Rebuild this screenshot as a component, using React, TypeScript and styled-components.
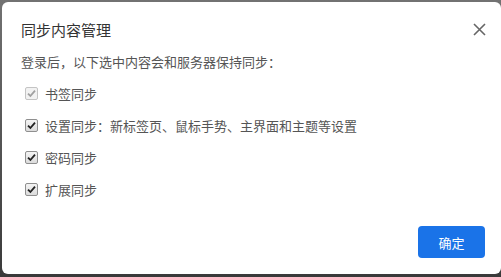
import React, { ReactElement } from 'react';
import styled, { createGlobalStyle } from 'styled-components';

const GlobalStyle = createGlobalStyle`
  html, body {
    margin: 0;
    padding: 0;
    width: 501px;
    height: 277px;
    overflow: hidden;
    background: linear-gradient(#727272, #3a3a3a);
    font-family: "Liberation Sans", "Noto Sans CJK SC", sans-serif;
  }
`;

const Overlay = styled.div`
  width: 501px;
  height: 277px;
  padding: 2px 0 3px 2px;
  box-sizing: border-box;
`;

const Dialog = styled.section`
  width: 100%;
  height: 100%;
  background: #fff;
  border-radius: 6px;
  box-sizing: border-box;
  padding: 16px 20px 16px 19px;
  display: flex;
  flex-direction: column;
`;

const Header = styled.header`
  display: flex;
  justify-content: space-between;
  align-items: center;
  height: 22px;
`;

const Title = styled.h1`
  margin: 0;
  font-size: 15px;
  font-weight: normal;
  color: #333;
  font-family: "Noto Sans CJK SC", sans-serif;
`;

const CloseButton = styled.button`
  width: 16px;
  height: 16px;
  padding: 0;
  margin-right: -6px;
  border: 0;
  background: none;
  display: flex;
  align-items: center;
  justify-content: center;
`;

const Description = styled.p`
  margin: 13px 0 0;
  font-size: 13px;
  line-height: 18px;
  color: #555;
  font-family: "Noto Sans CJK SC", sans-serif;
`;

const List = styled.ul`
  list-style: none;
  margin: 6px 0 0;
  padding: 0;
`;

const Row = styled.li`
  height: 32px;
  display: flex;
  align-items: center;
  font-size: 13px;
  color: #555;
  font-family: "Noto Sans CJK SC", sans-serif;
`;

const Box = styled.span<{ $disabled?: boolean }>`
  width: 11px;
  height: 11px;
  margin: 0 7px 0 4px;
  border: 1px solid ${(p) => (p.$disabled ? '#c4c4c4' : '#8f8f8f')};
  border-radius: 2px;
  background: ${(p) => (p.$disabled ? '#f2f2f2' : 'linear-gradient(#f4f4f4, #dcdcdc)')};
  display: flex;
  align-items: center;
  justify-content: center;
`;

const Footer = styled.footer`
  margin-top: auto;
  display: flex;
  justify-content: flex-end;
`;

const PrimaryButton = styled.button`
  width: 67px;
  height: 32px;
  margin-right: -4px;
  border: 0;
  border-radius: 4px;
  background: #1a73e8;
  color: #fff;
  font-size: 13px;
  font-family: "Noto Sans CJK SC", sans-serif;
`;

function Check({ disabled }: { disabled?: boolean }): ReactElement {
  return (
    <Box $disabled={disabled}>
      <svg width="9" height="9" viewBox="0 0 9 9">
        <path
          d="M1 4.6 L3.4 7 L8 1.6"
          fill="none"
          stroke={disabled ? '#a0a0a0' : '#222'}
          strokeWidth="1.8"
        />
      </svg>
    </Box>
  );
}

const items = [
  { label: '书签同步', disabled: true },
  { label: '设置同步：新标签页、鼠标手势、主界面和主题等设置' },
  { label: '密码同步' },
  { label: '扩展同步' },
];

export default function App(): ReactElement {
  return (
    <Overlay>
      <GlobalStyle />
      <Dialog>
        <Header>
          <Title>同步内容管理</Title>
          <CloseButton>
            <svg width="13" height="13" viewBox="0 0 13 13">
              <path d="M1 1 L12 12 M12 1 L1 12" stroke="#666" strokeWidth="1.6" />
            </svg>
          </CloseButton>
        </Header>
        <Description>登录后，以下选中内容会和服务器保持同步：</Description>
        <List>
          {items.map((it) => (
            <Row key={it.label}>
              <Check disabled={it.disabled} />
              {it.label}
            </Row>
          ))}
        </List>
        <Footer>
          <PrimaryButton>确定</PrimaryButton>
        </Footer>
      </Dialog>
    </Overlay>
  );
}
